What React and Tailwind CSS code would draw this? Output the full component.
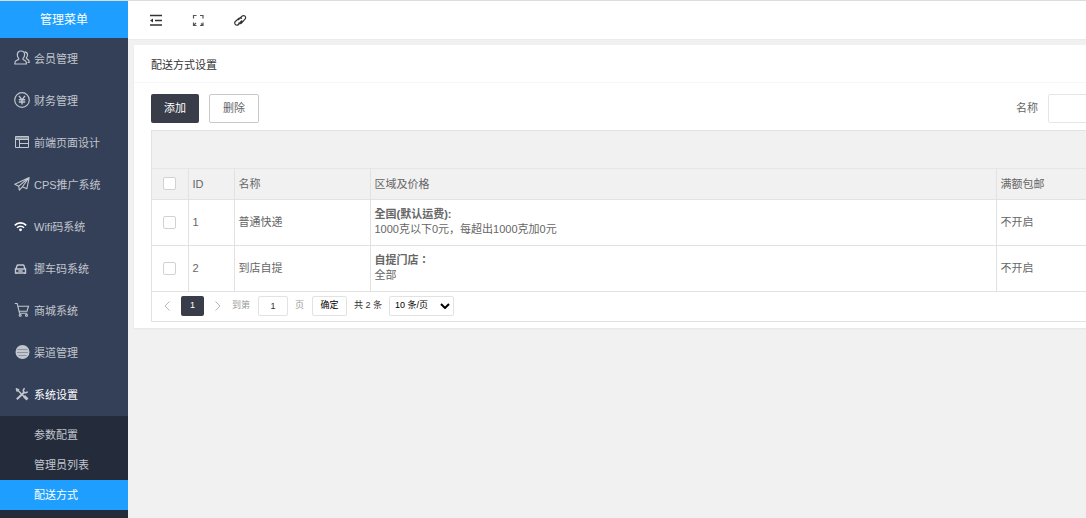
import React, { useState } from "react";

const UserIcon = () => (
  <svg viewBox="0 0 16 16" className="h-4 w-4" fill="none" stroke="currentColor" strokeWidth="1.2" strokeLinejoin="round">
    <path d="M7 1c2.300 0 3.600 1.600 3.600 3.800 0 1.500-.7 2.800-1.600 3.600v1l2.300 1.300c.9.600 1.200 1.600 1.200 3.300H.8c0-1.700.3-2.700 1.200-3.300l2.700-1.300v-1C3.800 7.600 3.300 6.300 3.300 4.800 3.300 2.600 4.700 1 7 1z" />
    <path d="M10.500 1.800c1.900.1 3 1.200 3 3 0 1.200-.4 2.200-1.100 2.900v.9l1.700 1.200c.8.600 1.100 1.500 1.100 2.700h-1.700" />
  </svg>
);

const YenIcon = () => (
  <svg viewBox="0 0 16 16" className="h-4 w-4" fill="none" stroke="currentColor">
    <circle cx="8" cy="8" r="7.3" strokeWidth="1.2" />
    <path d="M5 3.800l3 4 3-4M8 7.500v5M4.800 7.800h6.400M4.800 10h6.400" strokeWidth="1.4" />
  </svg>
);

const LayoutIcon = () => (
  <svg viewBox="0 0 16 16" className="h-4 w-4" fill="none" stroke="currentColor" strokeWidth="1">
    <path d="M1.500 2.500h13v11h-13zM1.500 5.500h13M5.500 5.500v8M5.500 9.500h9" />
    <path d="M1.500 2.500h13v3h-13z" fill="currentColor" fillOpacity="0.6" stroke="none" />
  </svg>
);

const PlaneIcon = () => (
  <svg viewBox="0 0 16 16" className="h-4 w-4" fill="none" stroke="currentColor" strokeWidth="1.1" strokeLinejoin="round">
    <path d="M15.200 1.500L.8 8.300l3.900 1.900L15.200 1.500l-2.400 11.300-4.400-2L15.200 1.500M4.700 10.200l.6 4L8.400 10.800" />
  </svg>
);

const WifiIcon = () => (
  <svg viewBox="0 0 16 16" className="h-4 w-4 text-white" fill="none" stroke="currentColor" strokeWidth="1.6">
    <path d="M.8 7.400c3-3.400 8.400-3.400 11.400 0M3 9.700c1.900-2 5.100-2 7 0" />
    <circle cx="6.500" cy="11.800" r="1.400" fill="currentColor" stroke="none" />
  </svg>
);

const CarIcon = () => (
  <svg viewBox="0 0 16 16" className="h-4 w-4" fill="none" stroke="currentColor" strokeWidth="1.4">
    <path d="M2 9l1-3.300q.2-.7 1-.7h5q.8 0 1 .7L11 9M1.500 9h10v4h-10zM2.300 12.500V14M10.700 12.500V14M4.300 11h4.400" />
  </svg>
);

const CartIcon = () => (
  <svg viewBox="0 0 16 16" className="h-4 w-4" fill="none" stroke="currentColor" strokeWidth="1.1">
    <path d="M.8 1.500h2.400l2.300 9.700h7.800M3.900 4.200h10.600l-1.500 5H5" />
    <circle cx="6.200" cy="13.300" r="1" />
    <circle cx="12.500" cy="13.300" r="1" />
  </svg>
);

const ChannelIcon = () => (
  <svg viewBox="0 0 16 16" className="h-4 w-4" fill="none" stroke="currentColor">
    <circle cx="8.500" cy="8" r="7" fill="currentColor" stroke="none" />
    <path d="M3.500 5.500h10M3 8.500h11M4.500 11.500h8" stroke="#8b93a3" strokeWidth="1" />
  </svg>
);

const ToolsIcon = () => (
  <svg viewBox="0 0 16 16" className="h-4 w-4" fill="none" stroke="currentColor">
    <path d="M3.500 4l9 9" strokeWidth="1.5" />
    <path d="M10 10l3.500 3.500" strokeWidth="2.800" />
    <path d="M2.800 13.200L10.500 6" strokeWidth="2" />
    <path d="M13.500 5.500a2.200 2.200 0 1 1-2.700-3" strokeWidth="1.600" />
    <path d="M2 2.500l3 1-2 2z" fill="currentColor" />
  </svg>
);

const MENU = [
  { label: "会员管理", Icon: UserIcon },
  { label: "财务管理", Icon: YenIcon },
  { label: "前端页面设计", Icon: LayoutIcon },
  { label: "CPS推广系统", Icon: PlaneIcon },
  { label: "Wifi码系统", Icon: WifiIcon },
  { label: "挪车码系统", Icon: CarIcon },
  { label: "商城系统", Icon: CartIcon },
  { label: "渠道管理", Icon: ChannelIcon },
  { label: "系统设置", Icon: ToolsIcon, open: true },
];

const SUBMENU = ["参数配置", "管理员列表", "配送方式"];

const ROWS = [
  { id: 1, name: "普通快递", title: "全国(默认运费):", detail: "1000克以下0元，每超出1000克加0元", free: "不开启" },
  { id: 2, name: "到店自提", title: "自提门店：", detail: "全部", free: "不开启" },
];

function Sidebar() {
  return (
    <nav className="flex w-32 shrink-0 flex-col bg-[#344058] text-[#c2c6cd]">
      <div className="flex h-[37px] items-center justify-center bg-[#1e9fff] text-xs text-white">管理菜单</div>
      {MENU.map(({ label, Icon, open }) => (
        <a key={label} href="#" className={`flex h-[42px] items-center gap-1 pt-px pl-3.5 ${open ? "text-white" : ""}`}>
          <span className="pb-1 text-[#c2c6cd]">
            <Icon />
          </span>
          {label}
        </a>
      ))}
      <div className="grow bg-[#242c3c] pt-1">
        {SUBMENU.map((label) => (
          <a
            key={label}
            href="#"
            className={`flex h-[30px] items-center pl-[34px] ${label === "配送方式" ? "bg-[#1e9fff] text-white" : ""}`}
          >
            {label}
          </a>
        ))}
      </div>
    </nav>
  );
}

function TopBar() {
  return (
    <header className="flex h-[39px] items-center gap-[26px] border-b border-[#ebebeb] bg-white pl-5 text-[#333]">
      <button type="button" aria-label="收起菜单">
        <svg viewBox="0 0 16 16" className="h-4 w-4" fill="none" stroke="currentColor" strokeWidth="1.300">
          <path d="M2 3.500h12M7 8.500h7M2 13h12" />
          <path d="M5 6.500v4L2 8.500z" fill="currentColor" stroke="none" />
        </svg>
      </button>
      <button type="button" aria-label="全屏">
        <svg viewBox="0 0 16 16" className="h-4 w-4" fill="none" stroke="#555" strokeWidth="1.200">
          <path d="M6.500 3.500h-3v3M10 3.500h3v3M6.500 13.500h-3v-3M10 13.500h3v-3M3.500 13.500l2.500-2.500M13 13.500l-2-2" />
        </svg>
      </button>
      <button type="button" aria-label="链接">
        <svg viewBox="0 0 16 16" className="h-4 w-4" fill="none" stroke="currentColor" strokeWidth="1.200">
          <path d="M6 8l4-3.800a2.100 2.100 0 0 1 3 3L9.500 11a2 2 0 0 1-3-.3M10 8.500l-3.500 4a2.100 2.100 0 0 1-3.200-3L7 6.200a2 2 0 0 1 2.800.5" />
        </svg>
      </button>
    </header>
  );
}

const Tick = ({ label, checked, onChange }) => (
  <input
    type="checkbox"
    aria-label={label}
    checked={checked}
    onChange={onChange}
    className="block h-[13px] w-[13px] appearance-none rounded-xs border border-[#d2d2d2] bg-white checked:bg-[#393d49]"
  />
);

function DataTable() {
  const [selected, setSelected] = useState([]);
  const toggle = (id) => setSelected((s) => (s.includes(id) ? s.filter((v) => v !== id) : [...s, id]));
  const all = selected.length === ROWS.length;

  return (
    <table className="w-full table-fixed border-collapse text-left">
      <colgroup>
        <col className="w-9" />
        <col className="w-[46px]" />
        <col className="w-[136px]" />
        <col />
        <col className="w-[90px]" />
      </colgroup>
      <thead className="bg-[#f1f1f1]">
        <tr className="h-[30px] divide-x divide-[#e2e2e2] border-b border-[#e2e2e2]">
          <th className="pl-[11px]">
            <Tick label="全选" checked={all} onChange={() => setSelected(all ? [] : ROWS.map((r) => r.id))} />
          </th>
          <th className="px-1 font-normal">ID</th>
          <th className="px-1 font-normal">名称</th>
          <th className="px-1 font-normal">区域及价格</th>
          <th className="px-1 font-normal">满额包邮</th>
        </tr>
      </thead>
      <tbody>
        {ROWS.map((row) => (
          <tr key={row.id} className="h-[46px] divide-x divide-[#e2e2e2] border-b border-[#e2e2e2]">
            <td className="pl-[11px]">
              <Tick label={row.name} checked={selected.includes(row.id)} onChange={() => toggle(row.id)} />
            </td>
            <td className="px-1">{row.id}</td>
            <td className="px-1">{row.name}</td>
            <td className="px-1 leading-[15px]">
              <b className="font-['Liberation_Sans','Noto_Sans_CJK_TC',sans-serif]">{row.title}</b>
              <br />
              {row.detail}
            </td>
            <td className="px-1">{row.free}</td>
          </tr>
        ))}
      </tbody>
    </table>
  );
}

function Pager() {
  return (
    <div className="flex h-[29px] items-center text-[9px] text-[#333]">
      <button type="button" aria-label="上一页" className="ml-[11px] text-[#b8b8b8]">
        <svg viewBox="0 0 8 10" className="h-2.5 w-2" fill="none" stroke="currentColor">
          <path d="M6.500 .5L2 5l4.500 4.500" />
        </svg>
      </button>
      <button type="button" className="ml-2.5 h-5 w-[23px] rounded-xs bg-[#393d49] text-white">1</button>
      <button type="button" aria-label="下一页" className="ml-2.5 text-[#b8b8b8]">
        <svg viewBox="0 0 8 10" className="h-2.5 w-2" fill="none" stroke="currentColor">
          <path d="M1.500 .5L6 5 1.500 9.500" />
        </svg>
      </button>
      <label htmlFor="page" className="ml-2.5 text-[#999]">到第</label>
      <input id="page" defaultValue="1" className="ml-2 h-5 w-[30px] rounded-xs border border-[#e2e2e2] text-center" />
      <span className="ml-[7px] text-[#999]">页</span>
      <button type="button" className="ml-2 h-5 w-[35px] rounded-xs border border-[#e2e2e2] text-black">确定</button>
      <span className="ml-[7px]">共 2 条</span>
      <div className="relative ml-[7px]">
        <select aria-label="每页条数" className="block h-5 w-[65px] appearance-none rounded-xs border border-[#e2e2e2] bg-white pl-[5px] text-black">
          <option>10 条/页</option>
          <option>20 条/页</option>
        </select>
        <svg viewBox="0 0 10 6" className="pointer-events-none absolute top-[7px] right-1 h-1.5 w-2.5" fill="none" stroke="#000" strokeWidth="2">
          <path d="M1 1l4 4 4-4" />
        </svg>
      </div>
    </div>
  );
}

export default function App() {
  return (
    <div className="flex min-h-screen overflow-hidden border-t border-[#dcdcdc] bg-[#f1f1f1] font-['Liberation_Sans','Noto_Sans_CJK_SC',sans-serif] text-[11px] text-[#666]">
      <Sidebar />
      <main className="min-w-0 grow">
        <TopBar />
        <section className="mt-[5px] ml-1.5 bg-white pb-1.5 shadow-xs">
          <h1 className="flex h-[38px] items-center border-b border-[#f6f6f6] px-[17px] pt-1 text-[#333]">配送方式设置</h1>
          <div className="pl-[17px]">
            <div className="flex items-center pt-[11px] pb-[7px]">
              <button type="button" className="h-[29px] w-12 rounded-xs bg-[#393d49] text-white">添加</button>
              <button type="button" className="ml-2.5 h-[29px] w-[50px] rounded-xs border border-[#c9c9c9] bg-white">删除</button>
              <label htmlFor="name" className="ml-auto">名称</label>
              <div className="ml-2.5 w-[38px] overflow-hidden">
                <input id="name" className="block h-[29px] w-32 rounded-xs border border-[#e6e6e6]" />
              </div>
            </div>
            <div className="border-y border-l border-[#e2e2e2]">
              <div className="h-[38px] border-b border-[#e6e6e6] bg-[#f1f1f1]" />
              <DataTable />
              <Pager />
            </div>
          </div>
        </section>
      </main>
    </div>
  );
}
